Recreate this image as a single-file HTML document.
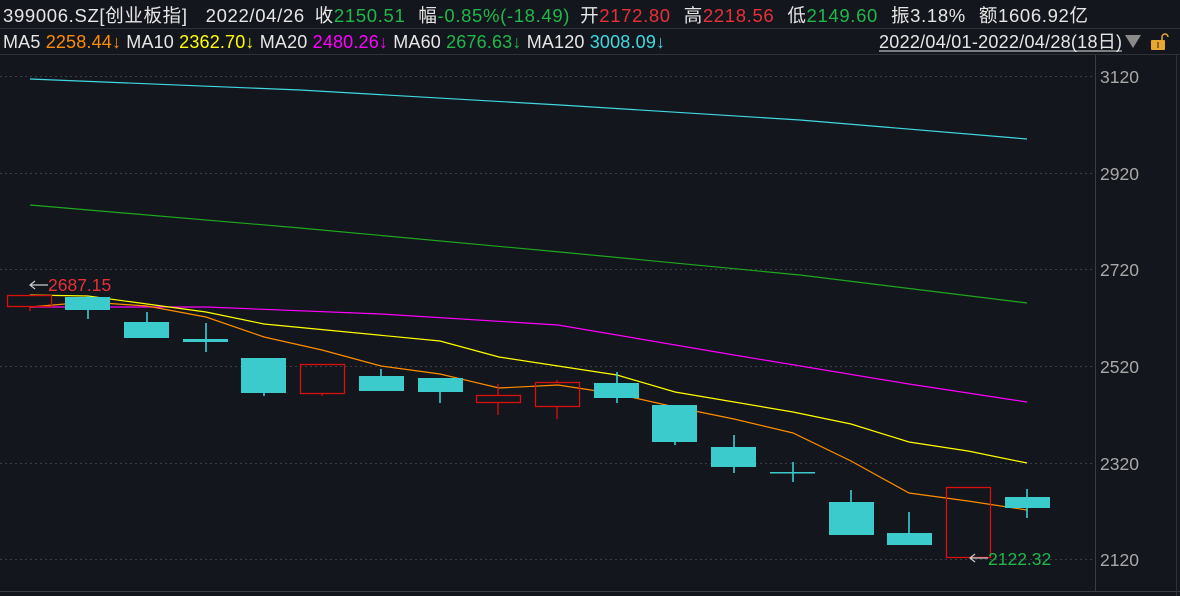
<!DOCTYPE html>
<html><head><meta charset="utf-8"><style>
html,body{margin:0;padding:0;background:#13161c;width:1180px;height:596px;overflow:hidden}
svg{display:block}
text{font-family:"Liberation Sans","Noto Sans CJK SC",sans-serif}
</style></head><body>
<svg width="1180" height="596" xmlns="http://www.w3.org/2000/svg">
<rect width="1180" height="596" fill="#13161c"/>
<g font-size="18.5">
<text x="3" y="22" textLength="1085" lengthAdjust="spacing"><tspan fill="#e6e6e6">399006.SZ[创业板指]</tspan><tspan fill="#e6e6e6" dx="18">2022/04/26</tspan><tspan fill="#e6e6e6" dx="10">收</tspan><tspan fill="#1fb84a">2150.51</tspan><tspan fill="#e6e6e6" dx="13">幅</tspan><tspan fill="#1fb84a">-0.85%(-18.49)</tspan><tspan fill="#e6e6e6" dx="10">开</tspan><tspan fill="#e8303a">2172.80</tspan><tspan fill="#e6e6e6" dx="13">高</tspan><tspan fill="#e8303a">2218.56</tspan><tspan fill="#e6e6e6" dx="13">低</tspan><tspan fill="#1fb84a">2149.60</tspan><tspan fill="#e6e6e6" dx="13">振</tspan><tspan fill="#e6e6e6">3.18%</tspan><tspan fill="#e6e6e6" dx="13">额</tspan><tspan fill="#e6e6e6">1606.92亿</tspan></text>
</g>
<line x1="0" y1="28.5" x2="1180" y2="28.5" stroke="#2e3238"/>
<g font-size="18">
<text x="3" y="48" textLength="662" lengthAdjust="spacing"><tspan fill="#e6e6e6">MA5 </tspan><tspan fill="#ff8c00">2258.44↓</tspan><tspan fill="#e6e6e6"> MA10 </tspan><tspan fill="#ffff00">2362.70↓</tspan><tspan fill="#e6e6e6"> MA20 </tspan><tspan fill="#ff00ff">2480.26↓</tspan><tspan fill="#e6e6e6"> MA60 </tspan><tspan fill="#1fb84a">2676.63↓</tspan><tspan fill="#e6e6e6"> MA120 </tspan><tspan fill="#40d8e0">3008.09↓</tspan></text>
<text x="879" y="48" fill="#e6e6e6" textLength="243" lengthAdjust="spacing">2022/04/01-2022/04/28(18日)</text>
</g>
<line x1="879" y1="51" x2="1122" y2="51" stroke="#e6e6e6"/>
<polygon points="1125,35 1141,35 1133,48" fill="#8a8a8a"/>
<rect x="1151" y="40" width="14" height="10" rx="1" fill="#e8a830"/>
<path d="M1162 40 v-3 a3 3 0 0 1 6 0" fill="none" stroke="#e8a830" stroke-width="1.5"/>
<line x1="1158" y1="42" x2="1158" y2="48" stroke="#222" stroke-width="1"/>
<line x1="0" y1="54.5" x2="1180" y2="54.5" stroke="#2e3238"/>
<line x1="1095.5" y1="55" x2="1095.5" y2="591" stroke="#3a3d44"/>
<line x1="0" y1="591.5" x2="1180" y2="591.5" stroke="#3a3d44"/>
<line x1="1176.5" y1="55" x2="1176.5" y2="596" stroke="#2e3238"/>
<g stroke="#3a3e44" stroke-dasharray="2,3">
<line x1="0" y1="76.5" x2="1095" y2="76.5"/><line x1="0" y1="173.5" x2="1095" y2="173.5"/>
<line x1="0" y1="269.5" x2="1095" y2="269.5"/><line x1="0" y1="366.5" x2="1095" y2="366.5"/>
<line x1="0" y1="463.5" x2="1095" y2="463.5"/><line x1="0" y1="559.5" x2="1095" y2="559.5"/>
</g>
<g fill="#a8a8a8" font-size="17.5">
<text x="1100" y="83">3120</text><text x="1100" y="180">2920</text><text x="1100" y="276">2720</text>
<text x="1100" y="373">2520</text><text x="1100" y="470">2320</text><text x="1100" y="566">2120</text>
</g>
<g fill="none" stroke-width="1.2">
<polyline stroke="#40d8e0" points="30,79 300,90 560,105 800,120 1027,139"/>
<polyline stroke="#1fa81f" points="30,205 300,228 560,252 800,275 1027,303"/>
<polyline stroke="#ff00ff" points="30,307 206,307 381,314 558,325 734,355 909,384 1027,402"/>
<polyline stroke="#ffff00" points="30,295 88,296 147,304 206,312 264,324 440,341 499,357 617,375 675,392 793,412 851,424 909,442 968,451 1027,463"/>
<polyline stroke="#ff8c00" points="30,307 88,302 147,306 206,317 264,337 322,350 381,366 440,374 499,388 558,385 617,394 675,407 734,419 793,433 851,461 909,493 968,501 1027,510"/>
</g>
<g stroke="#40d8e0" stroke-width="1.5">
<line x1="88" y1="296" x2="88" y2="319"/><line x1="147" y1="312" x2="147" y2="338"/>
<line x1="206" y1="323" x2="206" y2="352"/><line x1="264" y1="358" x2="264" y2="396"/>
<line x1="381" y1="369" x2="381" y2="391"/><line x1="440" y1="378" x2="440" y2="403"/>
<line x1="617" y1="372" x2="617" y2="403"/><line x1="675" y1="405" x2="675" y2="445"/>
<line x1="734" y1="435" x2="734" y2="473"/><line x1="793" y1="462" x2="793" y2="482"/>
<line x1="851" y1="490" x2="851" y2="535"/><line x1="909" y1="512" x2="909" y2="545"/>
<line x1="1027" y1="489" x2="1027" y2="518"/>
</g>
<g fill="#3bcbcc">
<rect x="65" y="297" width="45" height="13"/><rect x="124" y="322" width="45" height="16"/>
<rect x="183" y="339" width="45" height="3"/><rect x="241" y="358" width="45" height="35"/>
<rect x="359" y="376" width="45" height="15"/><rect x="418" y="378" width="45" height="14"/>
<rect x="594" y="383" width="45" height="15"/><rect x="652" y="405" width="45" height="37"/>
<rect x="711" y="447" width="45" height="20"/><rect x="770" y="472" width="45" height="1.5"/>
<rect x="829" y="502" width="45" height="33"/><rect x="887" y="533" width="45" height="12"/>
<rect x="1005" y="497" width="45" height="11"/>
</g>
<g stroke="#d81010" stroke-width="1.3" fill="none">
<rect x="7.5" y="295.5" width="44" height="11"/><line x1="30" y1="306" x2="30" y2="311"/>
<rect x="300.5" y="364.5" width="44" height="29"/><line x1="322" y1="394" x2="322" y2="396"/>
<rect x="476.5" y="395.5" width="44" height="7"/><line x1="498" y1="384" x2="498" y2="395"/><line x1="498" y1="402" x2="498" y2="415"/>
<rect x="535.5" y="382.5" width="44" height="24"/><line x1="557" y1="380" x2="557" y2="382"/><line x1="557" y1="406" x2="557" y2="419"/>
<rect x="946.5" y="487.5" width="44" height="70"/>
</g>
<g stroke="#cccccc" stroke-width="1.2" fill="none">
<path d="M48 285 H30 M35 281 L30 285 L35 289"/>
<path d="M988 558 H970 M975 554 L970 558 L975 562"/>
</g>
<text x="48" y="291" fill="#e8303a" font-size="17.5">2687.15</text>
<text x="988" y="565" fill="#1fb84a" font-size="17.5">2122.32</text>
</svg>
</body></html>
